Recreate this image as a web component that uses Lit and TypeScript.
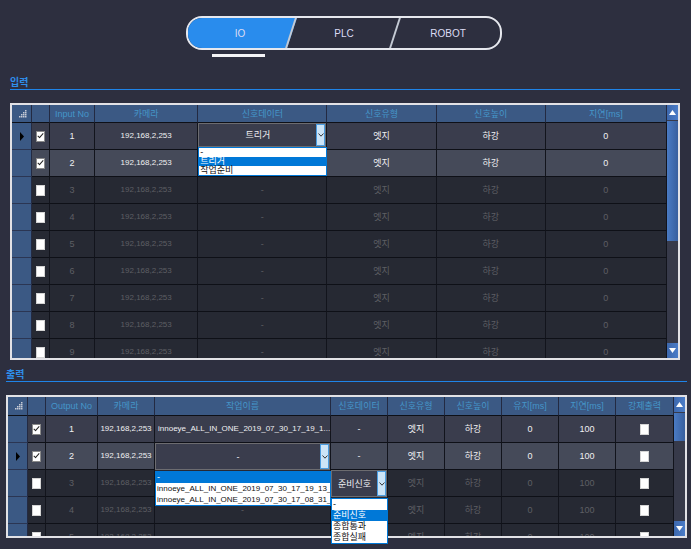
import { LitElement, html, css, svg, nothing } from "lit";
import { customElement, property } from "lit/decorators.js";

type Combo = { kind: "combo"; value: string; options: string[]; label: string; tall?: boolean };
type Cell = string | Combo | { kind: "check"; checked: boolean; label: string };
type Row = { current?: boolean; enabled: boolean; cells: Cell[] };
type Column = { title: string; width: number; left?: boolean };

const check = (checked: boolean, label: string): Cell => ({ kind: "check", checked, label });

/** Long codes (addresses, job names) are set a size smaller. */
const sizeOf = (s: string) => (s.length > 10 ? "code" : "");

const inputColumns: Column[] = [
  { title: "", width: 20 },
  { title: "", width: 18 },
  { title: "Input No", width: 45 },
  { title: "카메라", width: 103 },
  { title: "신호데이터", width: 129 },
  { title: "신호유형", width: 109 },
  { title: "신호높이", width: 109 },
  { title: "지연[ms]", width: 121 },
];

const outputColumns: Column[] = [
  { title: "", width: 20 },
  { title: "", width: 18 },
  { title: "Output No", width: 52 },
  { title: "카메라", width: 57 },
  { title: "작업이름", width: 176, left: true },
  { title: "신호데이터", width: 57 },
  { title: "신호유형", width: 57 },
  { title: "신호높이", width: 57 },
  { title: "유지[ms]", width: 57 },
  { title: "지연[ms]", width: 57 },
  { title: "강제출력", width: 58 },
];

const camera = "192,168,2,253";

const inputRows: Row[] = Array.from({ length: 9 }, (_, i) => ({
  current: i === 0,
  enabled: i < 2,
  cells: [
    check(i < 2, `입력 ${i + 1}`),
    String(i + 1),
    camera,
    i === 0
      ? { kind: "combo", value: "트리거", options: ["-", "트리거", "작업준비"], label: "신호데이터" }
      : i === 1
        ? ""
        : "-",
    "엣지",
    "하강",
    "0",
  ],
}));

const jobCells: Cell[] = [
  "innoeye_ALL_IN_ONE_2019_07_30_17_19_1...",
  {
    kind: "combo",
    value: "-",
    options: [
      "-",
      "innoeye_ALL_IN_ONE_2019_07_30_17_19_13_2",
      "innoeye_ALL_IN_ONE_2019_07_30_17_08_31_9",
    ],
    label: "작업이름",
    tall: true,
  },
  "",
  "-",
  "-",
];

const signalCells: Cell[] = [
  "-",
  "-",
  {
    kind: "combo",
    value: "준비신호",
    options: ["-", "준비신호", "종합통과", "종합실패"],
    label: "신호데이터",
    tall: true,
  },
  "",
  "",
];

const outputRows: Row[] = jobCells.map((job, i) => ({
  current: i === 1,
  enabled: i < 2,
  cells: [
    check(i < 2, `출력 ${i + 1}`),
    String(i + 1),
    camera,
    job,
    signalCells[i],
    "엣지",
    "하강",
    "0",
    "100",
    check(false, `강제출력 ${i + 1}`),
  ],
}));

@customElement("signal-grid")
export class SignalGrid extends LitElement {
  @property({ attribute: false }) columns: Column[] = [];
  @property({ attribute: false }) rows: Row[] = [];

  static styles = css`
    :host {
      display: block;
      position: relative;
      border: 2px solid #e2e2e6;
      background: #2c2e3d;
    }
    .body {
      display: flex;
      height: var(--grid-height);
    }
    .viewport {
      flex: 1;
      min-width: 0;
      overflow: hidden;
    }
    table {
      width: 100%;
      table-layout: fixed;
      border-collapse: separate;
      border-spacing: 0;
      font-size: 9px;
    }
    th,
    td {
      box-sizing: border-box;
      padding: 0;
      text-align: center;
      vertical-align: middle;
      font-weight: 400;
      white-space: nowrap;
      line-height: 12px;
      border-right: 1px solid #12141c;
      border-bottom: 1px solid #0e1017;
    }
    .head {
      height: var(--head-height);
      background: #3b5984;
      color: #4596c9;
      border-right-color: #232a42;
    }
    td,
    .mark {
      height: 27px;
    }
    .mark {
      background: #3b5984;
      border-right-color: #232a42;
      border-bottom-color: #2b3653;
    }
    .code {
      font-size: 8px;
    }
    .left {
      text-align: left;
      padding-left: 3px;
    }
    .row {
      background: #262933;
      color: #5e5f64;
    }
    .row.on {
      background: #3a3d4d;
      color: #f0f0f2;
    }
    .row.on.alt {
      background: #454a59;
    }
    .icon {
      display: block;
      margin: 0 4px 0 auto;
    }
    .pointer {
      display: block;
      margin: 0 auto;
    }
    .check {
      appearance: none;
      display: block;
      position: relative;
      box-sizing: border-box;
      width: 9px;
      height: 11px;
      margin: 0 auto;
      background: #fff;
      border: 1px solid #d4d4d4;
    }
    .check:checked {
      border-color: #8a8a8a;
    }
    .check:checked::before {
      content: "";
      position: absolute;
      left: 2px;
      top: 0;
      width: 2px;
      height: 5px;
      border: solid #222;
      border-width: 0 1px 1px 0;
      transform: rotate(42deg);
    }
    .combo {
      display: flex;
      flex-direction: column;
      height: 26px;
    }
    .field {
      display: flex;
      flex: none;
      box-sizing: border-box;
      height: 24px;
      border: 1px solid #6c6c70;
      background: #3a3d4d;
    }
    .tall .field {
      height: 27px;
    }
    .select {
      appearance: none;
      flex: 1;
      min-width: 0;
      margin: 0;
      padding: 0;
      border: 0;
      border-radius: 0;
      background: none;
      color: #f0f0f2;
      font: inherit;
      text-align: center;
      text-align-last: center;
    }
    .drop {
      flex: none;
      display: flex;
      align-items: center;
      justify-content: center;
      box-sizing: border-box;
      width: 9px;
      border: 1px solid #4a9ce0;
      background: #cce4f7;
    }
    .list {
      position: absolute;
      z-index: 2;
      box-sizing: border-box;
      margin: 24px 0 0;
      padding: 0;
      border: 1px solid #0078d7;
      background: #fff;
      list-style: none;
      text-align: left;
      color: #111;
      overflow: clip;
    }
    .tall .list {
      margin-top: 28px;
    }
    .option {
      height: 9px;
      padding-left: 1px;
      line-height: 9px;
    }
    .tall .option {
      height: 11px;
      line-height: 11px;
    }
    .option.picked {
      background: #0078d7;
      color: #fff;
    }
    .scroll {
      flex: none;
      display: flex;
      flex-direction: column;
      width: 11px;
      background: #373a4a;
    }
    .step {
      flex: none;
      display: flex;
      align-items: center;
      justify-content: center;
      height: 15px;
      padding: 0;
      border: 0;
      background: linear-gradient(90deg, #3d68ad, #4a7cc8);
    }
    .thumb {
      flex: none;
      height: var(--thumb);
      margin-top: 1px;
      background: linear-gradient(90deg, #4a7bc4, #385f9e);
    }
    .space {
      flex: 1;
    }
  `;

  private get total() {
    return this.columns.reduce((sum, c) => sum + c.width, 0);
  }

  private sizeMark() {
    const dots: [number, number][] = [
      [6, 0], [4, 2], [6, 2], [2, 4], [4, 4], [6, 4], [0, 6], [2, 6], [4, 6], [6, 6],
    ];
    return html`<svg class="icon" width="8" height="8" viewBox="0 0 8 8" fill="#c8ccd6">
      ${dots.map(([x, y]) => svg`<rect x=${x} y=${y} width="1.5" height="1.5" />`)}
    </svg>`;
  }

  private cell(cell: Cell, col: number) {
    if (typeof cell === "string") {
      const left = this.columns[col].left && cell.length > 1;
      return html`<td class="${sizeOf(cell)} ${left ? "left" : ""}">${cell}</td>`;
    }
    if (cell.kind === "check") {
      return html`<td>
        <input class="check" type="checkbox" aria-label=${cell.label} .checked=${cell.checked} />
      </td>`;
    }
    const share = this.columns[col].width / this.total;
    return html`<td>
      <div class="combo ${cell.tall ? "tall" : ""}">
        <ul class="list" style="width: calc((100% - 11px) * ${share})">
          ${cell.options.map(
            (o) =>
              html`<li class="option ${sizeOf(o)} ${o === cell.value ? "picked" : ""}">${o}</li>`,
          )}
        </ul>
        <div class="field">
          <select class="select" aria-label=${cell.label}>
            ${cell.options.map((o) => html`<option ?selected=${o === cell.value}>${o}</option>`)}
          </select>
          <span class="drop">
            <svg width="6" height="4" viewBox="0 0 6 4" fill="none" stroke="#333">
              <path d="M.5 .5 3 3.2 5.5 .5" />
            </svg>
          </span>
        </div>
      </div>
    </td>`;
  }

  render() {
    return html`<div class="body">
      <div class="viewport">
        <table>
          <colgroup>
            ${this.columns.map((c) => html`<col style="width: ${c.width}px" />`)}
          </colgroup>
          <thead>
            <tr>
              ${this.columns.map(
                (c, i) => html`<th class="head" scope="col">
                  ${i === 0 ? this.sizeMark() : c.title}
                </th>`,
              )}
            </tr>
          </thead>
          <tbody>
            ${this.rows.map(
              (r, i) => html`<tr class="row ${r.enabled ? "on" : ""} ${i % 2 ? "alt" : ""}">
                <th class="mark" scope="row">
                  ${r.current
                    ? html`<svg class="pointer" width="4" height="9" viewBox="0 0 4 9">
                        <path d="M0 0 4 4.5 0 9Z" />
                      </svg>`
                    : nothing}
                </th>
                ${r.cells.map((c, k) => this.cell(c, k + 1))}
              </tr>`,
            )}
          </tbody>
        </table>
      </div>
      <div class="scroll">
        <button class="step" aria-label="위로">
          <svg width="7" height="5" viewBox="0 0 7 5" fill="#fff"><path d="M0 5 3.5 0 7 5Z" /></svg>
        </button>
        <div class="thumb"></div>
        <div class="space"></div>
        <button class="step" aria-label="아래로">
          <svg width="7" height="5" viewBox="0 0 7 5" fill="#fff"><path d="M0 0 3.5 5 7 0Z" /></svg>
        </button>
      </div>
    </div>`;
  }
}

@customElement("app-root")
export class AppRoot extends LitElement {
  static styles = css`
    :host {
      display: block;
      box-sizing: border-box;
      min-height: 100vh;
      padding: 16px 4px 11px 6px;
      background: #2d2f3f;
      font-family: "Liberation Sans", "Noto Sans CJK KR", sans-serif;
      font-size: 10px;
    }
    .top {
      padding-right: 5px;
    }
    .tabs {
      display: flex;
      box-sizing: border-box;
      width: 316px;
      height: 34px;
      margin: 0 auto;
      border: 2px solid #e6e8ee;
      border-radius: 16px;
      overflow: hidden;
    }
    .tab {
      position: relative;
      z-index: 0;
      flex: 1;
      padding: 0;
      border: 0;
      background: none;
      color: #dcdcf4;
      font: inherit;
    }
    .tab::before {
      content: "";
      position: absolute;
      z-index: -1;
      inset: 0;
      border-right: 2px solid #c4cad4;
      transform: skewX(-18deg);
    }
    .tab.active::before {
      left: -20px;
      background: #298ced;
    }
    .tab:last-child::before {
      border: 0;
    }
    .under {
      width: 316px;
      margin: 4px auto 0;
    }
    .bar {
      width: 53px;
      height: 3px;
      margin-left: 26px;
      background: #f4f4f6;
    }
    .section {
      margin: 8px 0 0;
    }
    .section.first {
      margin: 19px 7px 0 4px;
    }
    .title {
      height: 13px;
      margin: 0 0 13px;
      border-bottom: 1px solid #1f84e8;
      color: #2f8eea;
      font-size: 10px;
      line-height: 13px;
    }
    .input {
      --grid-height: 253px;
      --head-height: 18px;
      --thumb: 120px;
    }
    .output {
      --grid-height: 139px;
      --head-height: 19px;
      --thumb: 28px;
    }
  `;

  render() {
    return html`
      <header class="top">
        <nav class="tabs">
          <button class="tab active">IO</button>
          <button class="tab">PLC</button>
          <button class="tab">ROBOT</button>
        </nav>
        <div class="under"><div class="bar"></div></div>
      </header>
      <section class="section first">
        <h2 class="title">입력</h2>
        <signal-grid class="input" .columns=${inputColumns} .rows=${inputRows}></signal-grid>
      </section>
      <section class="section">
        <h2 class="title">출력</h2>
        <signal-grid class="output" .columns=${outputColumns} .rows=${outputRows}></signal-grid>
      </section>
    `;
  }
}
